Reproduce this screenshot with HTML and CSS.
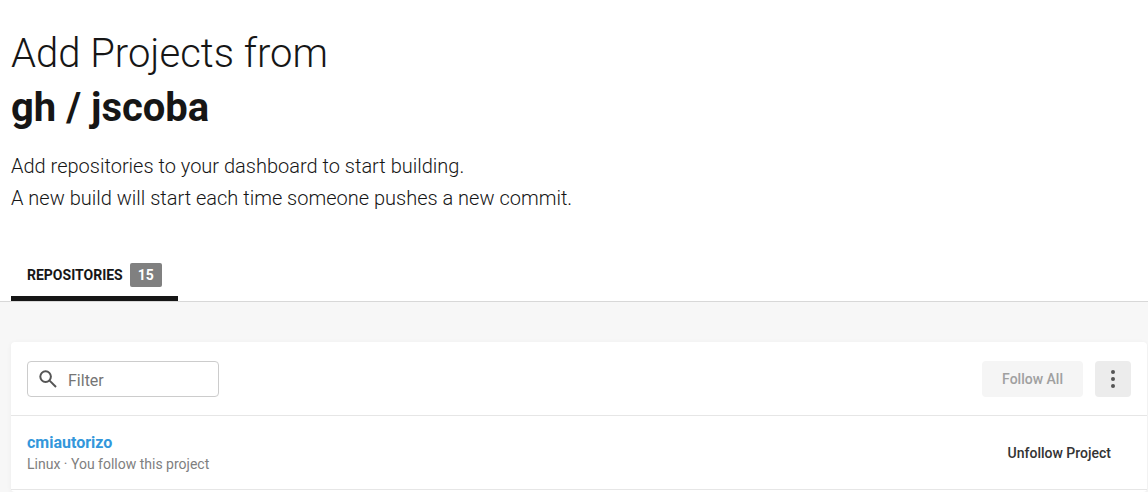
FILE: index.html
```html
<!DOCTYPE html>
<html lang="en">
<head>
<meta charset="utf-8">
<title>Add Projects</title>
<link rel="stylesheet" href="styles.css">
</head>
<body>
<header class="page-header">
  <h1 class="title">Add Projects from<br><strong>gh / jscoba</strong></h1>
  <p class="intro">Add repositories to your dashboard to start building.<br>A new build will start each time someone pushes a new commit.</p>
  <nav class="tabs">
    <a class="tab" href="#repositories">Repositories <span class="count">15</span></a>
  </nav>
</header>
<main class="content">
  <section class="card" id="repositories">
    <div class="toolbar">
      <label class="filter">
        <svg class="search-icon" viewBox="0 0 24 24" aria-hidden="true"><circle cx="9.600" cy="9.600" r="5.300"/><path d="M13.600 13.600L20 20"/></svg>
        <input class="filter-input" type="text" placeholder="Filter" aria-label="Filter">
      </label>
      <button class="follow-all" type="button" disabled>Follow All</button>
      <button class="more" type="button" aria-label="More options">
        <svg class="more-icon" viewBox="0 0 24 24" aria-hidden="true"><circle cx="12" cy="5" r="2"/><circle cx="12" cy="12" r="2"/><circle cx="12" cy="19" r="2"/></svg>
      </button>
    </div>
    <div class="project">
      <div class="project-info">
        <a class="project-name" href="#cmiautorizo">cmiautorizo</a>
        <span class="project-status">Linux · You follow this project</span>
      </div>
      <button class="unfollow" type="button">Unfollow Project</button>
    </div>
  </section>
</main>
</body>
</html>
```
FILE: styles.css
```css
* { box-sizing: border-box; }
body {
  margin: 0;
  min-height: 100vh;
  display: flex;
  flex-direction: column;
  background: #f7f7f7;
  color: #161616;
  font-family: Roboto, sans-serif;
}
button, input { font-family: inherit; }
.page-header {
  padding: 27px 11px 0;
  background: #fff;
  border-bottom: 1px solid #d8d8d8;
}
.title {
  margin: 0 0 15px;
  font-size: 40px;
  line-height: 54px;
  font-weight: 300;
}
.title strong { font-weight: 700; }
.intro {
  margin: 0;
  font-size: 20px;
  line-height: 32px;
  font-weight: 300;
}
.tabs { display: flex; margin-top: 49px; }
.tab {
  display: flex;
  align-items: center;
  gap: 7px;
  padding: 0 16px 9px;
  border-bottom: 5px solid #161616;
  color: #161616;
  font-size: 14px;
  line-height: 24px;
  font-weight: 700;
  text-transform: uppercase;
  text-decoration: none;
}
.count {
  padding: 0 8px;
  border-radius: 2px;
  background: #808080;
  color: #fff;
}
.content { flex: 1; display: flex; padding: 40px 1px 0 11px; }
.card {
  flex: 1;
  background: #fff;
  border-radius: 4px;
  box-shadow: 0 1px 5px rgba(0, 0, 0, 0.05);
}
.toolbar {
  display: flex;
  align-items: center;
  gap: 12px;
  padding: 19px 16px 18px;
  border-bottom: 1px solid #e6e6e6;
}
.filter {
  display: flex;
  align-items: center;
  gap: 8px;
  width: 192px;
  height: 36px;
  margin-right: auto;
  padding: 0 8px;
  border: 1px solid #ccc;
  border-radius: 4px;
}
.search-icon {
  flex: none;
  width: 24px;
  height: 24px;
  fill: none;
  stroke: #555;
  stroke-width: 2;
}
.filter-input {
  flex: 1;
  min-width: 0;
  padding: 2px 0 0;
  border: 0;
  outline: 0;
  background: none;
  color: #161616;
  font-size: 16px;
}
.filter-input::placeholder { color: #757575; }
.follow-all, .more {
  height: 36px;
  border: 0;
  border-radius: 4px;
}
.follow-all {
  padding: 0 20px;
  background: #f5f5f5;
  color: #a0a0a0;
  font-size: 14px;
  font-weight: 500;
}
.more { display: grid; place-items: center; width: 36px; padding: 0; background: #ececec; }
.more-icon { width: 24px; height: 24px; fill: #555; }
.project {
  display: flex;
  align-items: center;
  justify-content: space-between;
  padding: 16px 36px 14px 16px;
  border-bottom: 1px solid #e6e6e6;
}
.project-info { display: flex; flex-direction: column; }
.project-name {
  color: #3397db;
  font-size: 16px;
  line-height: 22px;
  font-weight: 700;
  text-decoration: none;
}
.project-status { color: #808080; font-size: 14px; line-height: 21px; }
.unfollow {
  padding: 0 0 2px;
  border: 0;
  background: none;
  color: #333;
  font-size: 14px;
  font-weight: 500;
}
```
